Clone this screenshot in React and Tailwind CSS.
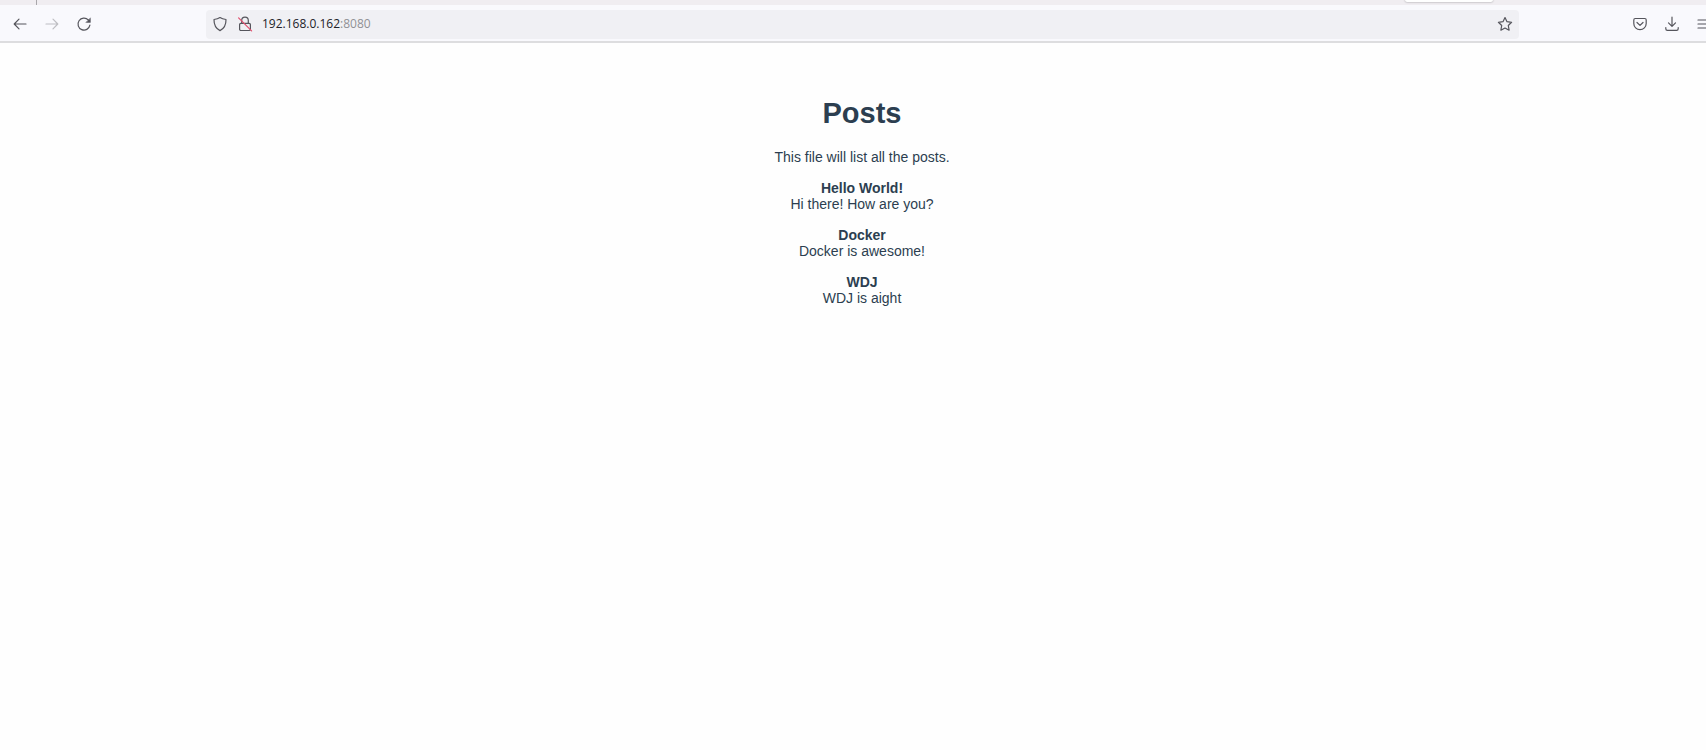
const posts = [
  { title: "Hello World!", body: "Hi there! How are you?" },
  { title: "Docker", body: "Docker is awesome!" },
  { title: "WDJ", body: "WDJ is aight" },
];

function Icon({ children, className = "" }) {
  return (
    <svg
      viewBox="0 0 16 16"
      className={`size-4 shrink-0 ${className}`}
      fill="none"
      stroke="currentColor"
      strokeWidth="1.2"
      strokeLinecap="round"
      strokeLinejoin="round"
      aria-hidden="true"
    >
      {children}
    </svg>
  );
}

function ToolButton({ label, children, disabled }) {
  return (
    <button
      type="button"
      aria-label={label}
      disabled={disabled}
      className="flex size-8 shrink-0 items-center justify-center text-[#55555c] disabled:text-[#bebec3]"
    >
      {children}
    </button>
  );
}

function TabStrip() {
  return (
    <div className="flex h-[5px] items-start justify-between bg-[#f0edf1] pl-9 pr-[231px]">
      <div className="h-full w-px bg-[#a9a7ab]" />
      <div className="h-[2px] w-[88px] rounded-b-sm bg-white shadow-[0_0_2px_#85858a]" />
    </div>
  );
}

function Toolbar() {
  return (
    <nav
      aria-label="Browser toolbar"
      className="flex items-center border-b-2 border-[#dddddf] bg-[#f9f9fd] px-1 pt-[3px] pb-px"
    >
      <div className="flex w-[202px] shrink-0">
        <ToolButton label="Back">
          <Icon>
            <path d="M14 8H2.2M7 3.2 2.2 8 7 12.8" />
          </Icon>
        </ToolButton>
        <ToolButton label="Forward" disabled>
          <Icon>
            <path d="M2 8h11.8M9 3.2 13.8 8 9 12.8" />
          </Icon>
        </ToolButton>
        <ToolButton label="Reload">
          <Icon>
            <path d="M13.9 9.2A6 6 0 1 1 12.3 3.9L13.4 5" />
            <path d="M14.4 2.2v4.2h-4.2z" fill="currentColor" strokeWidth="0.5" />
          </Icon>
        </ToolButton>
      </div>

      <div className="flex h-[29px] min-w-0 flex-1 items-center rounded bg-[#f0f0f4] px-1.5 text-[#55555c]">
        <Icon>
          <path d="M8 1.6C6.7 2.5 4.3 3.3 2 3.5c-.1 5 1.5 8.9 6 11.1 4.5-2.2 6.1-6.1 6-11.1C11.7 3.3 9.3 2.5 8 1.6z" />
        </Icon>
        <Icon className="ml-[9px]">
          <path d="M4.7 7.3V4.500a3.3 3.3 0 0 1 6.6 0v2.8" />
          <rect x="2.6" y="7.3" width="10.8" height="7.2" rx="1.3" />
          <path d="M1.6 1.900 14.600 14.900" stroke="#e2506f" />
        </Icon>
        <label className="ml-[9px] flex min-w-0 flex-1 items-center font-['Open_Sans','Noto_Sans',sans-serif] text-xs">
          <input
            type="text"
            aria-label="Address"
            defaultValue="192.168.0.162"
            className="field-sizing-content bg-transparent text-[#222228] outline-none"
          />
          <span className="text-[#909095]">:8080</span>
        </label>
        <button type="button" aria-label="Bookmark this page">
          <Icon>
            <path d="m8 1.5 2 4.2 4.6.6-3.3 3.2.8 4.700L8 12l-4.100 2.200.8-4.700L1.400 6.300 6 5.700z" />
          </Icon>
        </button>
      </div>

      <div className="flex w-[201px] shrink-0 justify-end">
        <ToolButton label="Save to Pocket">
          <Icon>
            <path d="M3.2 2.500h9.600c.8 0 1.400.6 1.400 1.400v3.600a6.200 6.200 0 0 1-12.400 0V3.900c0-.8.6-1.400 1.400-1.400z" />
            <path d="M5 6.500 8 9.400l3-2.900" />
          </Icon>
        </ToolButton>
        <ToolButton label="Downloads">
          <Icon>
            <path d="M8 1.200v9M4.500 6.800 8 10.300l3.500-3.500M1.800 11.500v1.200c0 .9.700 1.600 1.600 1.600h9.200c.9 0 1.600-.7 1.600-1.600v-1.200" />
          </Icon>
        </ToolButton>
        <ToolButton label="Open menu">
          <Icon>
            <path d="M2 4h12M2 8h12M2 12h12" />
          </Icon>
        </ToolButton>
      </div>
    </nav>
  );
}

export default function App() {
  return (
    <div className="min-h-screen overflow-hidden bg-[#fefefe]">
      <div className="w-[calc(100%+18px)]">
        <TabStrip />
        <Toolbar />
        <main className="pt-[54px] text-center font-['Liberation_Sans',Arial,sans-serif] text-sm leading-4 text-[#2c3e50]">
          <h1 className="text-[29px] leading-8 font-bold">Posts</h1>
          <p className="mt-5">This file will list all the posts.</p>
          <ul className="mt-[15px] flex flex-col gap-[15px]">
            {posts.map((post) => (
              <li key={post.title}>
                <h2 className="font-bold">{post.title}</h2>
                <p>{post.body}</p>
              </li>
            ))}
          </ul>
        </main>
      </div>
    </div>
  );
}
